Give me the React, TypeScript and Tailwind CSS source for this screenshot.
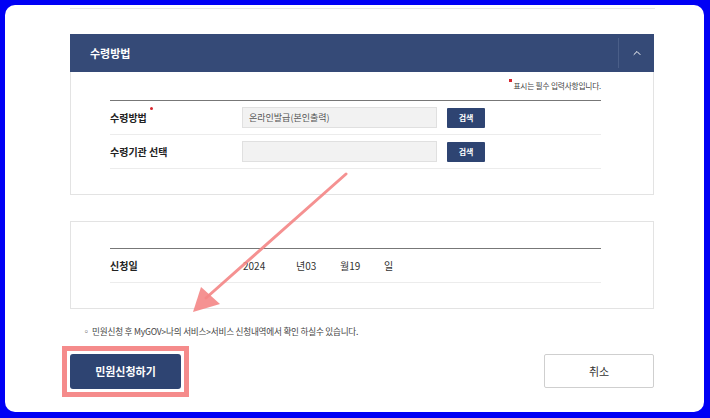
import { ChevronUp } from 'lucide-react';

const font = { fontFamily: '"Noto Sans CJK KR", "Noto Sans", sans-serif' };

function Row({ label, required, value }: { label: string; required?: boolean; value?: string }) {
    return (
        <div className="flex items-center h-[34px] border-b border-[#ececec]">
            <div className="w-[132px] text-[10px] font-bold text-[#222] relative">
                <span className="relative">
                    {label}
                    {required && <span className="absolute -right-[6px] -top-[3px] w-[3px] h-[3px] rounded-full bg-[#d7262e]" />}
                </span>
            </div>
            <div className="w-[195px] h-[21px] bg-[#f2f2f2] border border-[#e0e0e0] flex items-center px-[6px] text-[9px] text-[#555]">
                {value}
            </div>
            <button className="ml-[10px] w-[38px] h-[20px] bg-[#2e4472] text-white text-[8px] font-bold rounded-[1px]">
                검색
            </button>
        </div>
    );
}

export default function App() {
    return (
        <div className="w-[710px] h-[418px] bg-[#0000f5] p-[5px] relative" style={font}>
            <div className="w-[699px] h-[407px] bg-white rounded-[10px] pl-[65px] pt-[3px]">
                <div className="w-[585px] h-px bg-[#e8e8e8]" />

                {/* 수령방법 panel */}
                <div className="w-[584px] mt-[25px]">
                    <div className="h-[38px] bg-[#354a77] flex items-center justify-between">
                        <span className="pl-[20px] text-[11px] font-bold text-white">수령방법</span>
                        <div className="h-full flex items-center">
                            <div className="w-px h-[30px] bg-[#4a5e88]" />
                            <div className="w-[35px] flex justify-center">
                                <ChevronUp size={12} strokeWidth={2} className="text-white" />
                            </div>
                        </div>
                    </div>
                    <div className="h-[123px] border-x border-b border-[#e3e3e3] pl-[39px]">
                        <div className="w-[491px]">
                            <div className="h-[28px] flex items-center justify-end text-[7.7px] text-[#444] tracking-tight">
                                <span className="relative">
                                    <span className="absolute -left-[4px] -top-[1px] w-[3px] h-[3px] bg-[#d7262e]" />
                                    표시는 필수 입력사항입니다.
                                </span>
                            </div>
                            <div className="h-px bg-[#777]" />
                            <Row label="수령방법" required value="온라인발급(본인출력)" />
                            <Row label="수령기관 선택" />
                        </div>
                    </div>
                </div>

                {/* 신청일 panel */}
                <div className="w-[584px] h-[88px] mt-[26px] border border-[#e3e3e3] pl-[39px] pt-[26px]">
                    <div className="w-[491px]">
                        <div className="h-px bg-[#777]" />
                        <div className="flex items-center h-[34px] border-b border-[#ececec] text-[10px] text-[#333]">
                            <div className="w-[133px] font-bold text-[#222]">신청일</div>
                            <div className="w-[53px]">2024</div>
                            <div className="w-[44px]">년03</div>
                            <div className="w-[44px]">월19</div>
                            <div>일</div>
                        </div>
                    </div>
                </div>

                <p className="mt-[16px] ml-[12px] text-[8.6px] text-[#444] tracking-tight">
                    ◦ 민원신청 후 MyGOV&gt;나의 서비스&gt;서비스 신청내역에서 확인 하실수 있습니다.
                </p>

                <div className="w-[592px] flex items-center justify-between -ml-[8px] mt-[8px]">
                    <div className="border-[5px] border-[#f58b8b] p-[3px]">
                        <button className="w-[111px] h-[35px] bg-[#2e4472] rounded-[3px] text-white text-[11px] font-bold">
                            민원신청하기
                        </button>
                    </div>
                    <button className="w-[110px] h-[34px] bg-white border border-[#cfcfcf] rounded-[2px] text-[11px] text-[#333] mb-[1px]">
                        취소
                    </button>
                </div>
            </div>

            {/* annotation arrow */}
            <svg className="absolute left-0 top-0 pointer-events-none" width="710" height="418">
                <line x1="346" y1="174" x2="206" y2="298" stroke="#f48686" strokeWidth="3" strokeLinecap="round" opacity="0.9" />
                <polygon points="193,312 201,287 220,304" fill="#f48686" opacity="0.9" />
            </svg>
        </div>
    );
}
